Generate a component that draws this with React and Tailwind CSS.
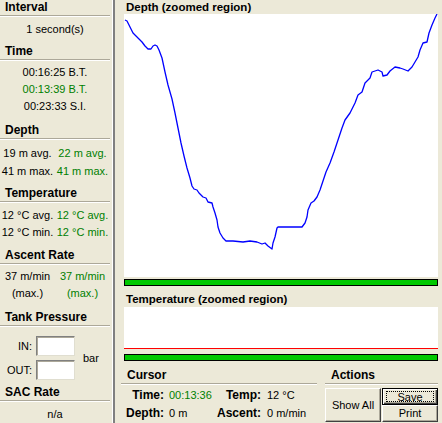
import React from 'react';

const FONT = "font-['Liberation_Sans',Arial,sans-serif]";

// depth trace, in page pixel coordinates (viewBox matches the graph's place on the page)
const DEPTH_PTS = [
  [125, 20], [127, 21], [129, 25], [131, 29], [133, 33], [136, 36], [139, 39], [142, 42], [145, 46],
  [148, 49], [151, 49], [153, 46], [155, 45], [157, 46], [159, 50], [162, 58], [165, 72], [168, 85],
  [172, 99], [175, 113], [178, 128], [181, 143], [184, 156], [187, 168], [190, 178], [192, 186],
  [194, 189], [197, 190], [199, 193], [203, 197], [206, 198], [208, 202], [212, 203], [213, 207],
  [215, 213], [217, 220], [218, 227], [220, 233], [223, 238], [226, 241], [233, 241], [243, 242],
  [250, 241], [257, 242], [262, 244], [265, 243], [268, 246], [272, 249], [273, 243], [275, 237],
  [277, 228], [278, 227], [302, 227], [305, 223], [307, 217], [308, 210], [311, 203], [314, 201],
  [317, 197], [320, 190], [323, 181], [326, 172], [330, 163], [334, 152], [338, 140], [342, 128],
  [345, 120], [350, 113], [355, 103], [358, 95], [362, 92], [365, 83], [370, 78], [372, 72],
  [378, 70], [382, 72], [383, 76], [387, 75], [390, 71], [395, 67], [400, 68], [403, 69], [408, 71],
  [412, 67], [415, 62], [418, 57], [420, 50], [423, 43], [427, 42], [429, 33], [432, 25], [435, 18],
  [437, 14],
];

function Header({ children, className = '' }) {
  return (
    <div className={className}>
      <div className="pl-[5px] h-[14px] leading-[14px] font-bold text-[12px] whitespace-nowrap">{children}</div>
      <div className="mt-[1px] w-[110px] border-t border-t-[#aca899] border-b border-b-white" />
    </div>
  );
}

function Pair({ a, b }) {
  return (
    <div className="grid grid-cols-2 w-[110px] text-center whitespace-nowrap">
      <span>{a}</span>
      <span className="text-[#008000]">{b}</span>
    </div>
  );
}

function Field() {
  return (
    <div className="w-[39px] h-[20px] bg-white border border-t-[#808080] border-l-[#808080] border-b-[#e0ded0] border-r-[#e0ded0] shadow-[inset_1px_1px_#aca899]" />
  );
}

function GroupHead({ children }) {
  return (
    <div>
      <div className="pt-[7px] pl-[6px] h-[21px] leading-[14px] font-bold text-[12px]">{children}</div>
      <div className="mt-[1px] border-t border-t-[#aca899] border-b border-b-white" />
    </div>
  );
}

export default function App() {
  const btn =
    'flex items-center justify-center bg-[#ece9d8] border border-t-white border-l-white border-b-[#404040] border-r-[#404040] shadow-[inset_-1px_-1px_#aca899]';

  return (
    <div className={`w-[442px] h-[423px] bg-[#ece9d8] flex overflow-hidden text-black text-[11px] ${FONT}`}>
      {/* left info column */}
      <div className="w-[112px] flex flex-col leading-[17px]">
        <Header>Interval</Header>
        <div className="mt-[4px] w-[110px] text-center">1 second(s)</div>

        <Header className="mt-[6px]">Time</Header>
        <div className="mt-[3px] w-[110px] text-center">
          <div>00:16:25 B.T.</div>
          <div className="text-[#008000]">00:13:39 B.T.</div>
          <div>00:23:33 S.I.</div>
        </div>

        <Header className="mt-[8px]">Depth</Header>
        <div className="mt-[4px] leading-[18px]">
          <Pair a="19 m avg." b="22 m avg." />
          <Pair a="41 m max." b="41 m max." />
        </div>

        <Header className="mt-[6px]">Temperature</Header>
        <div className="mt-[4px]">
          <Pair a="12 °C avg." b="12 °C avg." />
          <Pair a="12 °C min." b="12 °C min." />
        </div>

        <Header className="mt-[7px]">Ascent Rate</Header>
        <div className="mt-[3px]">
          <Pair a="37 m/min" b="37 m/min" />
          <Pair a="(max.)" b="(max.)" />
        </div>

        <Header className="mt-[8px]">Tank Pressure</Header>
        <div className="mt-[9px] flex items-center">
          <div className="flex flex-col gap-[4px]">
            <div className="flex items-center gap-[4px]">
              <span className="w-[32px] text-right">IN:</span>
              <Field />
            </div>
            <div className="flex items-center gap-[4px]">
              <span className="w-[32px] text-right">OUT:</span>
              <Field />
            </div>
          </div>
          <span className="ml-[8px]">bar</span>
        </div>

        <Header className="mt-[5px]">SAC Rate</Header>
        <div className="mt-[4px] w-[110px] text-center">n/a</div>
      </div>

      {/* splitter */}
      <div className="w-[3px] h-full border-l border-l-white bg-[#808080]" />

      {/* graphs */}
      <div className="flex-1 flex flex-col">
        <div className="ml-[9px] pl-[2px] h-[14px] leading-[14px] font-bold text-[11.5px]">Depth (zoomed region)</div>
        <svg
          className="ml-[9px] block bg-white"
          width="314"
          height="263"
          viewBox="124 14 314 263"
        >
          <polyline
            points={DEPTH_PTS.map((p) => p.join(',')).join(' ')}
            fill="none"
            stroke="#0000ff"
            strokeWidth="1.3"
            strokeLinejoin="round"
          />
        </svg>
        <div className="ml-[9px] mt-[2px] w-[314px] h-[7px] bg-[#00c800] border border-black" />

        <div className="ml-[9px] pl-[2px] h-[21px] pt-[6px] leading-[14px] font-bold text-[11.5px]">
          Temperature (zoomed region)
        </div>
        <div className="ml-[9px] w-[314px] h-[42px] bg-white flex flex-col justify-end">
          <div className="h-[1px] bg-[#ff0000]" />
        </div>
        <div className="ml-[9px] mt-[5px] w-[314px] h-[7px] bg-[#00c800] border border-black" />

        <div className="ml-[6px] flex gap-[8px]">
          {/* cursor readout */}
          <div className="w-[196px]">
            <GroupHead>Cursor</GroupHead>
            <div className="mt-[3px] grid grid-cols-[43px_45px_52px_1fr] gap-y-[4px] leading-[14px] whitespace-nowrap">
              <span className="text-right font-bold text-[12px]">Time:</span>
              <span className="pl-[5px] text-[#008000]">00:13:36</span>
              <span className="text-right font-bold text-[12px]">Temp:</span>
              <span className="pl-[6px]">12 °C</span>
              <span className="text-right font-bold text-[12px]">Depth:</span>
              <span className="pl-[5px]">0 m</span>
              <span className="text-right font-bold text-[12px]">Ascent:</span>
              <span className="pl-[6px]">0 m/min</span>
            </div>
          </div>

          {/* actions */}
          <div className="w-[113px]">
            <GroupHead>Actions</GroupHead>
            <div className="mt-[3px] flex gap-[1px]">
              <button className={`${btn} w-[56px] h-[34px]`}>Show All</button>
              <div className="flex flex-col">
                <button className="w-[56px] h-[17px] flex items-center justify-center bg-[#ece9d8] border border-black shadow-[inset_1px_1px_white,inset_-1px_-1px_#404040,inset_-2px_-2px_#aca899]">
                  <span className="w-[48px] h-[11px] leading-[10px] border border-dotted border-black text-center">Save</span>
                </button>
                <button className={`${btn} w-[56px] h-[17px]`}>Print</button>
              </div>
            </div>
          </div>
        </div>
      </div>
    </div>
  );
}
